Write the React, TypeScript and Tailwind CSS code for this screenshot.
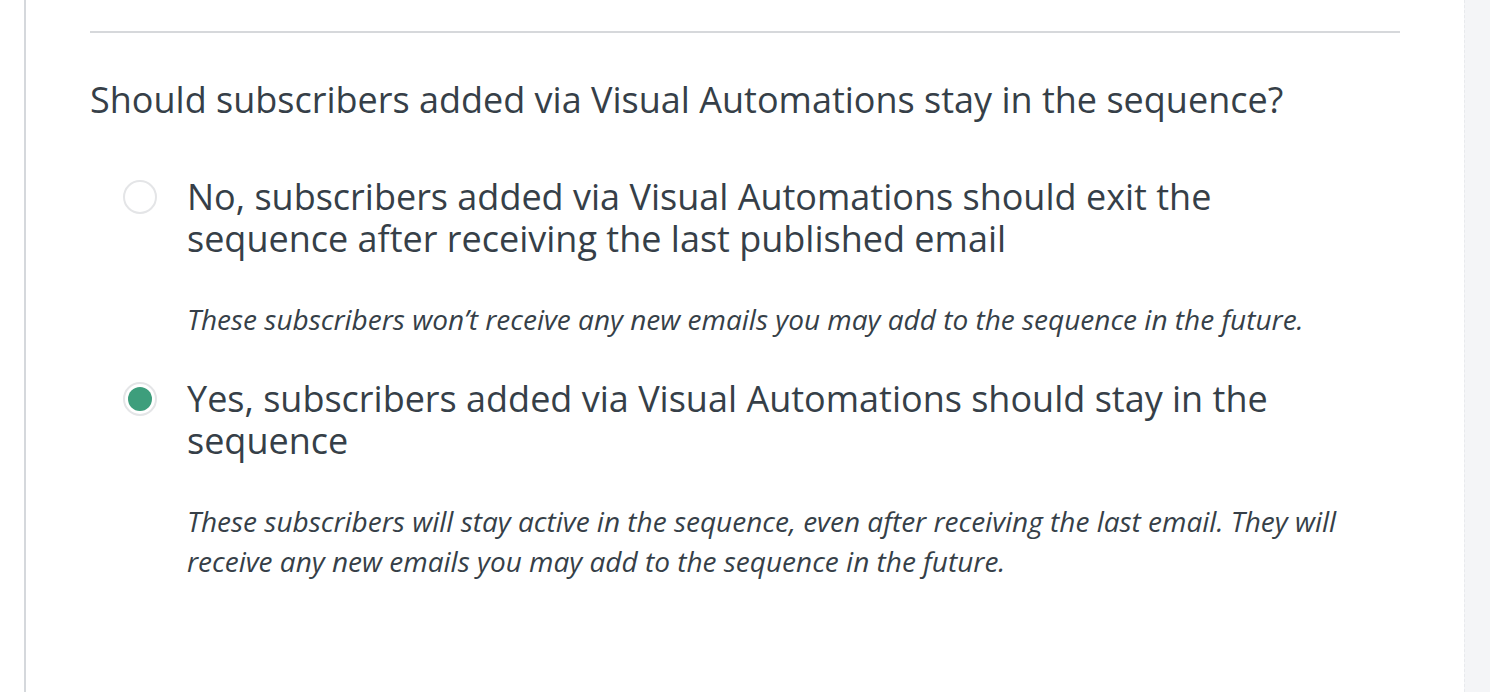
import { useState } from "react";

const options = [
  {
    id: "exit",
    label: "No, subscribers added via Visual Automations should exit the sequence after receiving the last published email",
    help: "These subscribers won’t receive any new emails you may add to the sequence in the future.",
  },
  {
    id: "stay",
    label: "Yes, subscribers added via Visual Automations should stay in the sequence",
    help: "These subscribers will stay active in the sequence, even after receiving the last email. They will receive any new emails you may add to the sequence in the future.",
  },
];

export default function App() {
  const [value, setValue] = useState("stay");

  return (
    <div className="flex h-[692px] w-full bg-white text-[#363f48] font-['Open_Sans',sans-serif] overflow-hidden">
      <div className="w-[24px] shrink-0" />
      <main className="flex-1 border-l-2 border-[#d5d8dc] pl-[64px] pr-[64px]">
        <div className="mt-[31px] h-[2px] bg-[#d6d8db]" />
        <h2 className="mt-[46px] text-[36px] leading-[42px] whitespace-nowrap">
          Should subscribers added via Visual Automations stay in the sequence?
        </h2>

        <div className="mt-[55px] pl-[33px]">
          {options.map((opt) => {
            const checked = value === opt.id;
            return (
              <div key={opt.id} className="mb-[39px]">
                <label className="flex items-start cursor-pointer" onClick={() => setValue(opt.id)}>
                  <span className="mt-[4px] flex h-[34px] w-[34px] shrink-0 items-center justify-center rounded-full border-2 border-[#e4e5e7] bg-white">
                    {checked && <span className="h-[24px] w-[24px] rounded-full bg-[#3d9e7c]" />}
                  </span>
                  <span className="ml-[30px] max-w-[1100px] text-[36px] leading-[42px]">{opt.label}</span>
                </label>
                <p className="mt-[39px] ml-[64px] text-[28px] leading-[40px] italic">{opt.help}</p>
              </div>
            );
          })}
        </div>
      </main>
      <aside className="w-[26px] shrink-0 border-l border-dashed border-[#e8eaed] bg-[#f4f5f7]" />
    </div>
  );
}
